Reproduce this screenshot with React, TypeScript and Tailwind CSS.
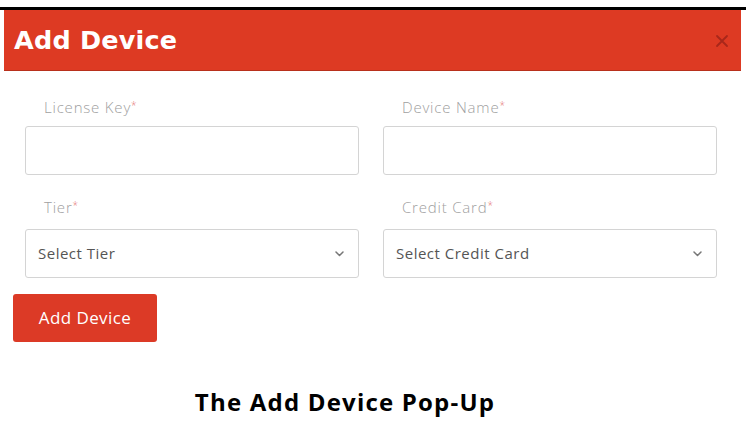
import React from "react";

const Chevron = () => (
  <svg width="9" height="6" viewBox="0 0 9 6" fill="none">
    <path d="M1 1l3.5 3.5L8 1" stroke="#777" strokeWidth="1.5" strokeLinecap="round" strokeLinejoin="round" />
  </svg>
);

const Label = ({ text }: { text: string }) => (
  <div className="pl-[19px] h-[20px] leading-[20px] text-[15px] font-light tracking-[0.8px] text-[#a0a0a0]" style={{ fontFamily: "'Open Sans', sans-serif" }}>
    {text}
    <span className="text-[#e57373] text-[10px] align-top relative top-[-2px]">*</span>
  </div>
);

export default function App() {
  return (
    <div className="w-[746px] h-[432px] bg-white flex flex-col overflow-hidden" style={{ fontFamily: "'Open Sans', sans-serif" }}>
      <div className="h-[7px]" />
      <div className="h-[3px] bg-black" />
      <div className="ml-[4px] mr-[5px] h-[61px] bg-[#dd3a23] border-b border-[#b8301c] flex items-center justify-between pl-[10px] pr-[12px]">
        <div className="text-white text-[25.5px] font-bold tracking-[0.2px]" style={{ fontFamily: "'DejaVu Sans', sans-serif" }}>
          Add Device
        </div>
        <svg width="14" height="14" viewBox="0 0 14 14" className="mt-[2px]">
          <path d="M2 2l10 10M12 2L2 12" stroke="#a8271a" strokeWidth="1.8" strokeLinecap="round" />
        </svg>
      </div>

      <div className="pl-[25px] pt-[26px] grid grid-cols-[334px_334px] gap-x-[24px]">
        <div className="flex flex-col">
          <Label text="License Key" />
          <div className="mt-[9px] h-[49px] border border-[#d4d4d4] rounded-[3px]" />
        </div>
        <div className="flex flex-col">
          <Label text="Device Name" />
          <div className="mt-[9px] h-[49px] border border-[#d4d4d4] rounded-[3px]" />
        </div>
        <div className="flex flex-col mt-[22px]">
          <Label text="Tier" />
          <div className="mt-[12px] h-[49px] border border-[#d4d4d4] rounded-[3px] flex items-center justify-between pl-[12px] pr-[14px]">
            <span className="text-[15px] tracking-[0.5px] text-[#555]">Select Tier</span>
            <Chevron />
          </div>
        </div>
        <div className="flex flex-col mt-[22px]">
          <Label text="Credit Card" />
          <div className="mt-[12px] h-[49px] border border-[#d4d4d4] rounded-[3px] flex items-center justify-between pl-[12px] pr-[14px]">
            <span className="text-[15px] tracking-[0.5px] text-[#555]">Select Credit Card</span>
            <Chevron />
          </div>
        </div>
      </div>

      <div className="pl-[13px] pt-[16px]">
        <button className="w-[144px] h-[48px] bg-[#dc3a26] rounded-[3px] text-white text-[17px] tracking-[0.4px] flex items-center justify-center">
          Add Device
        </button>
      </div>

      <div className="w-[690px] flex justify-center mt-[42px]">
        <div className="text-[24px] font-bold tracking-[1.2px] text-black" style={{ fontFamily: "'Open Sans', sans-serif" }}>
          The Add Device Pop-Up
        </div>
      </div>
    </div>
  );
}
